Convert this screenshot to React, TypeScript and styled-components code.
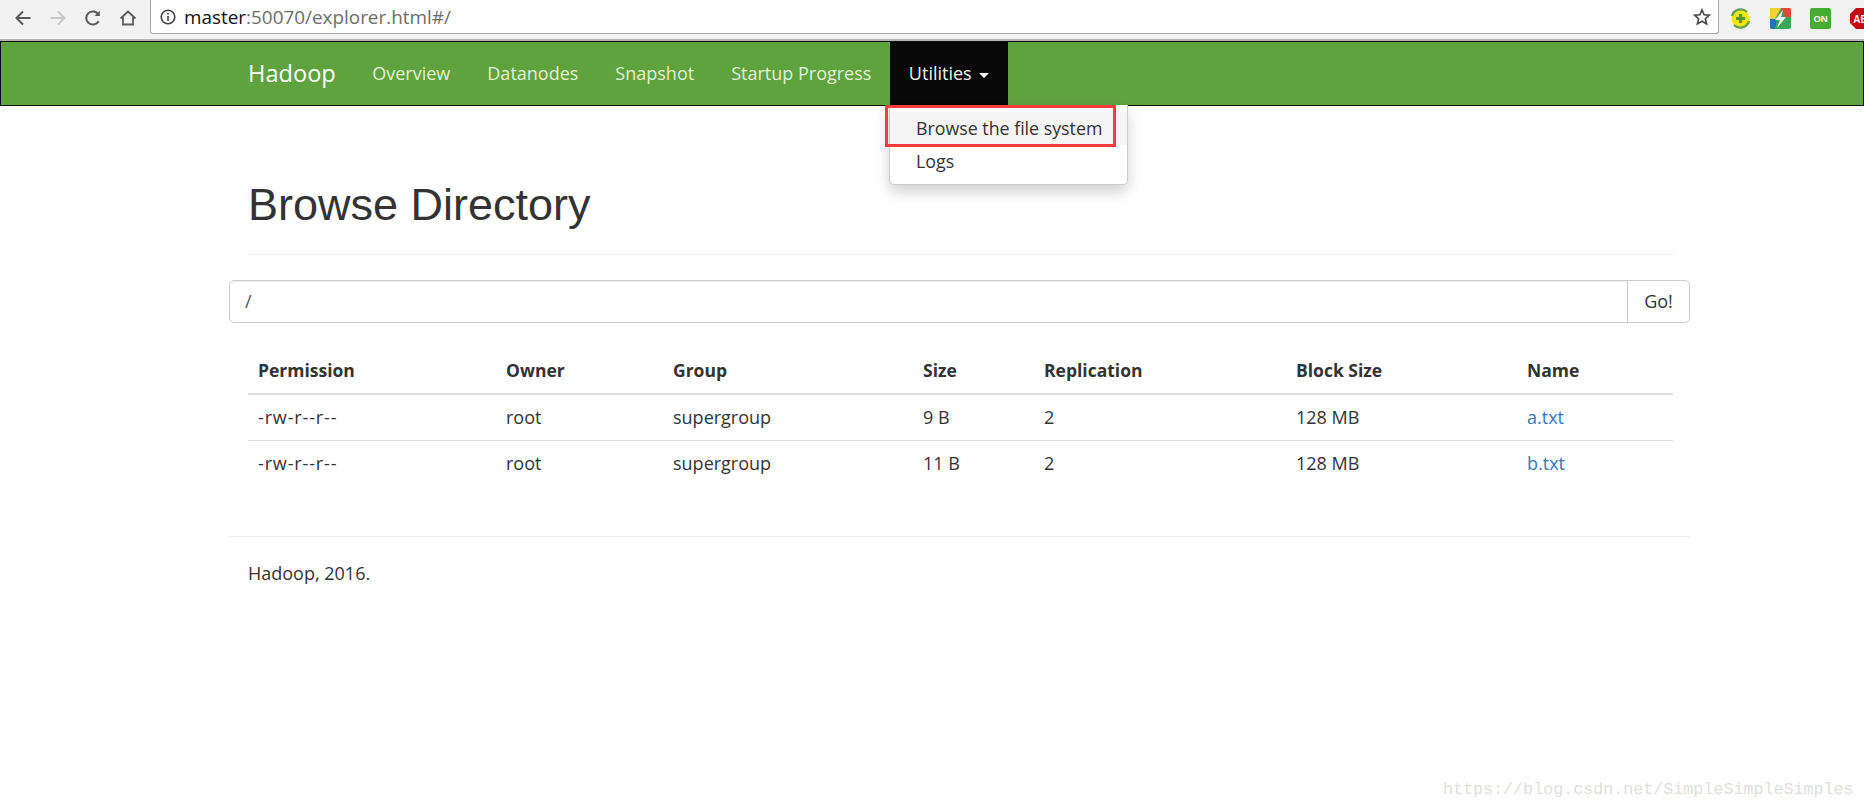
import React from "react";
import styled, { createGlobalStyle } from "styled-components";

const Global = createGlobalStyle`
  html, body { margin: 0; padding: 0; background: #fff; }
  body { font-family: "Open Sans", "Noto Sans", sans-serif; font-size: 18px; color: #333; overflow: hidden; }
  * { box-sizing: border-box; }
`;

const Page = styled.div`
  position: relative;
  width: 1864px;
  height: 810px;
  overflow: hidden;
`;

const ChromeBar = styled.div`
  height: 41px;
  background: #f2f2f2;
  border-bottom: 2px solid #b4b4b4;
  display: flex;
  align-items: flex-start;
  padding-left: 14px;
`;

const ToolIcon = styled.svg`
  width: 18px;
  height: 18px;
  margin-top: 9px;
  margin-right: 17px;
  flex: none;
  fill: none;
  stroke: ${(p) => p.color || "#5a5a5a"};
  stroke-width: 2;
`;

const Omnibox = styled.div`
  width: 1569px;
  height: 34px;
  margin-left: 0;
  flex: none;
  background: #fff;
  border: 1px solid #a9a9a9;
  border-top: none;
  border-radius: 0 0 3px 3px;
  display: flex;
  align-items: center;
  padding: 0 7px 0 9px;
  font-size: 18.9px;
`;

const UrlHost = styled.span`
  color: #111;
  margin-left: 8px;
`;
const UrlRest = styled.span`
  color: #6d6d6d;
  flex: 1;
`;

const Extensions = styled.div`
  display: flex;
  align-items: center;
  flex: none;
  margin-left: 11px;
  margin-top: 8px;
  gap: 19px;
`;

const ExtIcon = styled.svg`
  width: 21px;
  height: 21px;
  flex: none;
`;

const Navbar = styled.nav`
  height: 65px;
  background: #5fa33e;
  border: 1px solid #0c0c0c;
  display: flex;
  padding-left: 229px;
`;

const Brand = styled.a`
  color: #fff;
  font-size: 23.6px;
  line-height: 63px;
  padding: 0 18px 0 18px;
`;

const NavItem = styled.a<{ $active?: boolean }>`
  color: ${(p) => (p.$active ? "#f4f4e4" : "#e2f0d4")};
  background: ${(p) => (p.$active ? "#080808" : "transparent")};
  font-size: 18px;
  line-height: 63px;
  padding: 0 ${(p) => (p.$active ? "19px" : "18.5px")};
  display: flex;
  align-items: center;
`;

const Caret = styled.span`
  display: inline-block;
  margin-left: 7px;
  margin-top: 3px;
  border-top: 5px solid #fff;
  border-left: 5px solid transparent;
  border-right: 5px solid transparent;
`;

const Dropdown = styled.div`
  position: absolute;
  left: 889px;
  top: 105px;
  width: 239px;
  height: 80px;
  background: #fff;
  border: 1px solid #ccc;
  border-top: none;
  border-radius: 0 0 5px 5px;
  box-shadow: 0 7px 14px rgba(0, 0, 0, 0.18);
  padding-top: 7px;
`;

const DropItem = styled.div<{ $hover?: boolean }>`
  height: 33px;
  line-height: 33px;
  padding-left: 26px;
  font-size: 17.8px;
  color: #333;
  background: ${(p) => (p.$hover ? "#f5f5f5" : "transparent")};
`;

const Annotation = styled.div`
  position: absolute;
  left: 885px;
  top: 105px;
  width: 231px;
  height: 42px;
  border: 3px solid #f73b3b;
`;

const Main = styled.main`
  margin-left: 229px;
  width: 1461px;
`;

const Header = styled.div`
  margin: 0 17px 0 19px;
  padding-top: 74px;
  height: 149px;
  border-bottom: 1px solid #eee;
`;

const Title = styled.h1`
  margin: 0;
  font-family: "Liberation Sans", Arial, sans-serif;
  font-weight: 400;
  font-size: 45px;
  line-height: 50px;
  color: #333;
`;

const InputGroup = styled.div`
  margin-top: 25px;
  height: 43px;
  display: flex;
  border: 1px solid #ccc;
  border-radius: 5px;
`;

const PathField = styled.div`
  flex: 1;
  padding-left: 15px;
  line-height: 41px;
  font-size: 18px;
  color: #555;
  box-shadow: inset 0 1px 1px rgba(0, 0, 0, 0.075);
  border-radius: 5px 0 0 5px;
`;

const GoButton = styled.div`
  width: 62px;
  border-left: 1px solid #ccc;
  text-align: center;
  line-height: 41px;
  font-size: 18px;
  color: #333;
`;

const Table = styled.table`
  margin: 25px 17px 0 19px;
  width: 1425px;
  border-collapse: collapse;
  table-layout: fixed;
  font-size: 18px;
`;

const Th = styled.th<{ $w: number }>`
  width: ${(p) => p.$w}px;
  text-align: left;
  font-weight: 700;
  font-size: 17.5px;
  height: 46px;
  padding: 0 10px 2px;
  border-bottom: 2px solid #ddd;
  color: #333;
`;

const Td = styled.td<{ $wide?: boolean }>`
  height: 46px;
  padding: 0 10px;
  color: #333;
  letter-spacing: ${(p) => (p.$wide ? "0.85px" : "normal")};
`;

const Row = styled.tr<{ $divided?: boolean }>`
  border-top: ${(p) => (p.$divided ? "1px solid #ddd" : "none")};
`;

const FileLink = styled.a`
  color: #337ab7;
`;

const Footer = styled.footer`
  margin-top: 50px;
  border-top: 1px solid #eee;
  padding: 24px 0 0 19px;
  font-size: 18px;
  line-height: 24px;
  color: #333;
`;

const Watermark = styled.div`
  position: absolute;
  left: 1443px;
  top: 780px;
  font-family: "Liberation Mono", monospace;
  font-size: 16.7px;
  line-height: 20px;
  color: #dfdfda;
  white-space: nowrap;
`;

const columns: [string, number][] = [
  ["Permission", 248],
  ["Owner", 167],
  ["Group", 250],
  ["Size", 121],
  ["Replication", 252],
  ["Block Size", 231],
  ["Name", 156],
];

const rows = [
  ["-rw-r--r--", "root", "supergroup", "9 B", "2", "128 MB", "a.txt"],
  ["-rw-r--r--", "root", "supergroup", "11 B", "2", "128 MB", "b.txt"],
];

export default function App() {
  return (
    <Page>
      <Global />
      <ChromeBar>
        <ToolIcon viewBox="0 0 18 18">
          <path d="M16.5 9H2.5M9 2.5L2.5 9L9 15.5" />
        </ToolIcon>
        <ToolIcon viewBox="0 0 18 18" color="#c9c9c9">
          <path d="M1.5 9H15.5M9 2.5L15.5 9L9 15.5" />
        </ToolIcon>
        <ToolIcon viewBox="0 0 18 18">
          <path d="M14.6 12.2A6.6 6.6 0 1 1 14.6 5.8" />
          <path d="M15.8 1.8V7H10.6Z" fill="#5a5a5a" stroke="none" />
        </ToolIcon>
        <ToolIcon viewBox="0 0 18 18" style={{ marginRight: 13 }}>
          <path d="M1.5 9.5L9 2.5L16.5 9.5M4 8V15.5H14V8" strokeWidth="1.8" />
        </ToolIcon>
        <Omnibox>
          <svg width="16" height="16" viewBox="0 0 16 16" fill="none" stroke="#444" strokeWidth="1.6">
            <circle cx="8" cy="8" r="6.8" />
            <path d="M8 7V12M8 4V5.6" />
          </svg>
          <UrlHost>master</UrlHost>
          <UrlRest>:50070/explorer.html#/</UrlRest>
          <svg width="18" height="18" viewBox="0 0 18 18" fill="none" stroke="#444" strokeWidth="1.6">
            <path d="M9 1.8L11.1 6.7L16.4 7.2L12.4 10.7L13.6 15.9L9 13.2L4.4 15.9L5.6 10.7L1.6 7.2L6.9 6.7Z" />
          </svg>
        </Omnibox>
        <Extensions>
          <ExtIcon viewBox="0 0 21 21">
            <circle cx="10.5" cy="10.5" r="9" fill="#f5e60e" />
            <path d="M2 8A9 9 0 0 1 17 4M19 13A9 9 0 0 1 4 17" fill="none" stroke="#62a04a" strokeWidth="2.4" />
            <path d="M10.5 6V15M6 10.5H15" stroke="#4d9a3c" strokeWidth="3.2" />
          </ExtIcon>
          <ExtIcon viewBox="0 0 21 21">
            <rect width="21" height="21" rx="2" fill="#3aa757" />
            <path d="M0 2a2 2 0 0 1 2-2h9L5 11H0Z" fill="#f7d038" />
            <path d="M11 0h8a2 2 0 0 1 2 2v7h-7Z" fill="#e8453c" />
            <path d="M0 11h7l-2 10H2a2 2 0 0 1-2-2Z" fill="#1b73ba" />
            <path d="M13 2L5 12H10L7 20L16 9H11Z" fill="#fff" />
          </ExtIcon>
          <ExtIcon viewBox="0 0 21 21">
            <rect width="21" height="21" rx="2" fill="#46ac32" />
            <text x="10.5" y="14" textAnchor="middle" fontFamily="Liberation Sans" fontWeight="700" fontSize="9.5" fill="#fff">ON</text>
          </ExtIcon>
          <ExtIcon viewBox="0 0 21 21">
            <path d="M6 0H15L21 6V15L15 21H6L0 15V6Z" fill="#c8090f" />
            <text x="10.5" y="14.5" textAnchor="middle" fontFamily="Liberation Sans" fontWeight="700" fontSize="10" fill="#fff">AB</text>
          </ExtIcon>
        </Extensions>
      </ChromeBar>
      <Navbar>
        <Brand>Hadoop</Brand>
        <NavItem>Overview</NavItem>
        <NavItem>Datanodes</NavItem>
        <NavItem>Snapshot</NavItem>
        <NavItem>Startup Progress</NavItem>
        <NavItem $active>
          Utilities
          <Caret />
        </NavItem>
      </Navbar>
      <Dropdown>
        <DropItem $hover>Browse the file system</DropItem>
        <DropItem>Logs</DropItem>
      </Dropdown>
      <Annotation />
      <Main>
        <Header>
          <Title>Browse Directory</Title>
        </Header>
        <InputGroup>
          <PathField>/</PathField>
          <GoButton>Go!</GoButton>
        </InputGroup>
        <Table>
          <thead>
            <tr>
              {columns.map(([name, w]) => (
                <Th key={name} $w={w}>
                  {name}
                </Th>
              ))}
            </tr>
          </thead>
          <tbody>
            {rows.map((row, i) => (
              <Row key={i} $divided={i > 0}>
                {row.map((cell, j) => (
                  <Td key={j} $wide={j === 0}>
                    {j === 6 ? <FileLink>{cell}</FileLink> : cell}
                  </Td>
                ))}
              </Row>
            ))}
          </tbody>
        </Table>
        <Footer>Hadoop, 2016.</Footer>
      </Main>
      <Watermark>https://blog.csdn.net/SimpleSimpleSimples</Watermark>
    </Page>
  );
}
